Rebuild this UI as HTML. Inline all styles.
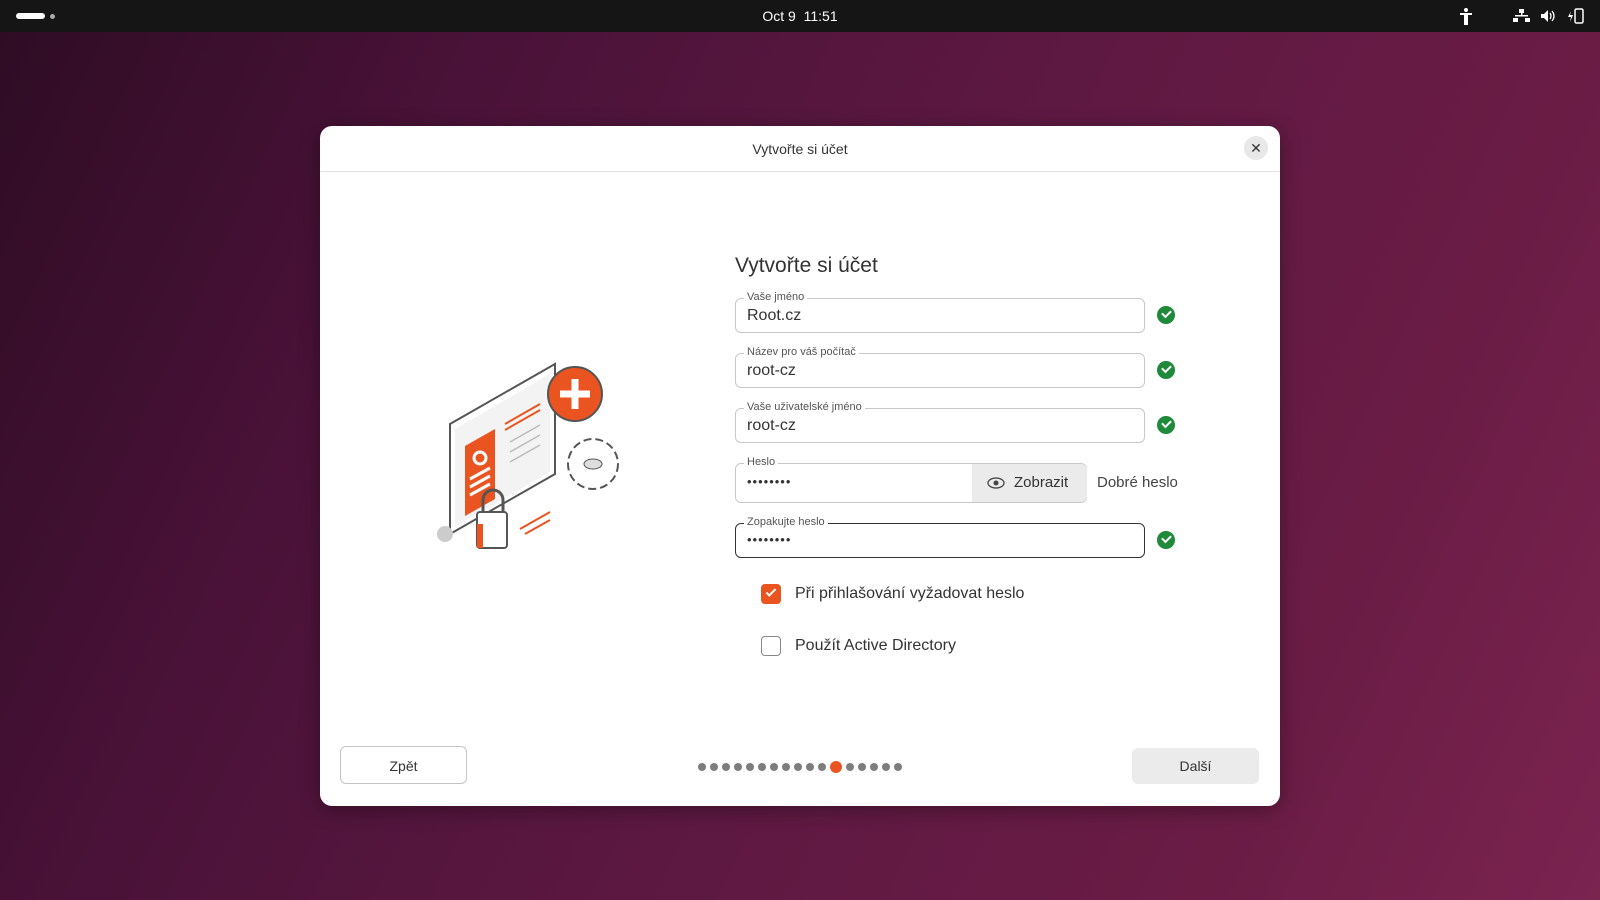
<!DOCTYPE html>
<html><head><meta charset="utf-8"><style>
*{box-sizing:border-box;margin:0;padding:0}
body{width:1600px;height:900px;overflow:hidden;font-family:"Liberation Sans",sans-serif;position:relative;
background:linear-gradient(115deg,#2e0c24 0%,#4a1238 25%,#5e1942 55%,#6a1c45 80%,#7a2450 100%);}
.bar{position:absolute;left:0;top:0;width:1600px;height:32px;background:#151515;color:#fff;}
.clock{position:absolute;left:0;width:1600px;top:8px;text-align:center;font-size:14px;}
.pill{position:absolute;left:16px;top:13px;width:29px;height:6px;border-radius:3px;background:#fff}
.dot0{position:absolute;left:50px;top:14px;width:5px;height:5px;border-radius:50%;background:#aaa}
.dlg{position:absolute;left:320px;top:126px;width:960px;height:680px;background:#fff;border-radius:12px;box-shadow:0 4px 20px rgba(0,0,0,.35)}
.hdr{height:46px;border-bottom:1px solid #e2e2e2;text-align:center;line-height:46px;font-size:14px;color:#333}
.x{position:absolute;right:12px;top:10px;width:24px;height:24px;border-radius:50%;background:#e8e8e8;text-align:center;line-height:24px;font-size:14px;color:#333}
.a{position:absolute}
.h1{left:415px;top:128px;font-size:21px;color:#333}
.f{position:absolute;left:415px;width:410px;height:35px;border:1px solid #c8c8c8;border-radius:6px}
.f .l{position:absolute;left:8px;top:-8px;background:#fff;padding:0 3px;font-size:11px;color:#555}
.f .v{position:absolute;left:11px;top:8px;font-size:16px;color:#333}
.ok{position:absolute;left:837px;width:18px;height:18px;border-radius:50%;background:#1f8a3a}
.ok:after{content:"";position:absolute;left:5px;top:4px;width:7px;height:4px;border-left:2px solid #fff;border-bottom:2px solid #fff;transform:rotate(-45deg)}
.cb{position:absolute;left:441px;width:20px;height:20px;border-radius:4px}
.lab{position:absolute;left:475px;font-size:16px;color:#333}
.btn{position:absolute;height:38px;border-radius:6px;text-align:center;line-height:38px;font-size:14px;color:#333}
.dots{position:absolute;left:378px;top:635px;display:flex;gap:4px;align-items:center}
.dots i{width:8px;height:8px;border-radius:50%;background:#7d7d7d}
.dots i.c{width:12px;height:12px;background:#e95420}
</style></head><body>
<div class="bar"><div class="pill"></div><div class="dot0"></div><div class="clock">Oct 9&nbsp;&nbsp;11:51</div>
<svg class="a" style="left:1455px;top:6px" width="140" height="20" viewBox="0 0 140 20" fill="#fff">
<circle cx="11" cy="4" r="2"/><rect x="5" y="7" width="12" height="2"/><rect x="9" y="7" width="4" height="12"/>
<rect x="64" y="3" width="5" height="4"/><rect x="58" y="12" width="5" height="4"/><rect x="70" y="12" width="5" height="4"/><rect x="60" y="9" width="13" height="1.5"/><rect x="66" y="7" width="1.5" height="3"/>
<path d="M86 8h3l4-4v12l-4-4h-3z"/><path d="M95 7q2 3 0 6M97 5q4 5 0 10" stroke="#fff" fill="none" stroke-width="1.3"/>
<rect x="120" y="3" width="8" height="14" rx="1.5" fill="none" stroke="#fff" stroke-width="1.5"/><path d="M116 5l-3 6h3l-1 5 3-7h-3z"/>
</svg></div>
<div class="dlg">
<div class="hdr">Vytvořte si účet</div><div class="x">✕</div>
<svg class="a" style="left:105px;top:228px" width="220" height="210" viewBox="0 0 220 210">
<path d="M25 70l105-60 0 110-105 60z" fill="#fff" stroke="#555" stroke-width="2"/>
<path d="M30 75l95-55 0 98-95 55z" fill="#f3f3f3"/>
<path d="M40 92l30-17v70l-30 17z" fill="#e95420"/>
<circle cx="55" cy="104" r="6" fill="none" stroke="#fff" stroke-width="3"/>
<path d="M45 125l20-11M45 133l20-11M45 141l20-11" stroke="#fff" stroke-width="3"/>
<path d="M80 70l35-20M80 76l35-20" stroke="#e95420" stroke-width="2"/>
<path d="M85 88l30-17M85 98l30-17M85 108l30-17" stroke="#bbb" stroke-width="1.5"/>
<circle cx="150" cy="40" r="27" fill="#e95420" stroke="#555" stroke-width="2"/>
<path d="M150 25v30M135 40h30" stroke="#fff" stroke-width="7"/>
<circle cx="168" cy="110" r="25" fill="#fff" stroke="#555" stroke-width="2" stroke-dasharray="8 4"/>
<ellipse cx="168" cy="110" rx="9" ry="5" fill="#ddd" stroke="#555"/>
<rect x="52" y="158" width="30" height="36" rx="3" fill="#fff" stroke="#555" stroke-width="2"/>
<rect x="52" y="170" width="6" height="24" fill="#e95420"/>
<path d="M58 158v-12a10 10 0 0 1 20 0v12" fill="none" stroke="#555" stroke-width="3"/>
<path d="M95 175l30-17M100 180l25-14" stroke="#e95420" stroke-width="2"/>
<circle cx="20" cy="180" r="8" fill="#ccc"/>
</svg>
<div class="a h1">Vytvořte si účet</div>
<div class="f" style="top:172px"><span class="l">Vaše jméno</span><span class="v">Root.cz</span></div><div class="ok" style="top:180px"></div>
<div class="f" style="top:227px"><span class="l">Název pro váš počítač</span><span class="v">root-cz</span></div><div class="ok" style="top:235px"></div>
<div class="f" style="top:282px"><span class="l">Vaše uživatelské jméno</span><span class="v">root-cz</span></div><div class="ok" style="top:290px"></div>
<div class="f" style="top:337px;width:352px;height:40px"><span class="l">Heslo</span><span class="v" style="top:10px;font-size:13px;letter-spacing:1px">••••••••</span>
<div style="position:absolute;left:236px;top:0;width:115px;height:38px;background:#ebebeb;border-radius:0 6px 6px 0;font-size:15px;line-height:38px;color:#333;padding-left:42px">Zobrazit</div>
<svg class="a" style="left:251px;top:13px" width="18" height="12"><ellipse cx="9" cy="6" rx="8" ry="5" fill="none" stroke="#444" stroke-width="1.3"/><circle cx="9" cy="6" r="2.5" fill="#444"/></svg></div>
<div class="a" style="left:777px;top:348px;font-size:15px;color:#444">Dobré heslo</div>
<div class="f" style="top:397px;border-color:#333"><span class="l">Zopakujte heslo</span><span class="v" style="top:8px;font-size:13px;letter-spacing:1px">••••••••</span></div><div class="ok" style="top:405px"></div>
<div class="cb" style="top:458px;background:#e95420"><div style="position:absolute;left:5px;top:5px;width:10px;height:5px;border-left:2px solid #fff;border-bottom:2px solid #fff;transform:rotate(-45deg)"></div></div>
<div class="lab" style="top:459px">Při přihlašování vyžadovat heslo</div>
<div class="cb" style="top:510px;border:1.5px solid #888"></div>
<div class="lab" style="top:511px">Použít Active Directory</div>
<div class="btn" style="left:20px;top:620px;width:127px;border:1px solid #c4c4c4">Zpět</div>
<div class="dots"><i></i><i></i><i></i><i></i><i></i><i></i><i></i><i></i><i></i><i></i><i></i><i class="c"></i><i></i><i></i><i></i><i></i><i></i></div>
<div class="btn" style="left:812px;top:622px;width:127px;height:36px;line-height:36px;background:#ebebeb">Další</div>
</div>
</body></html>
